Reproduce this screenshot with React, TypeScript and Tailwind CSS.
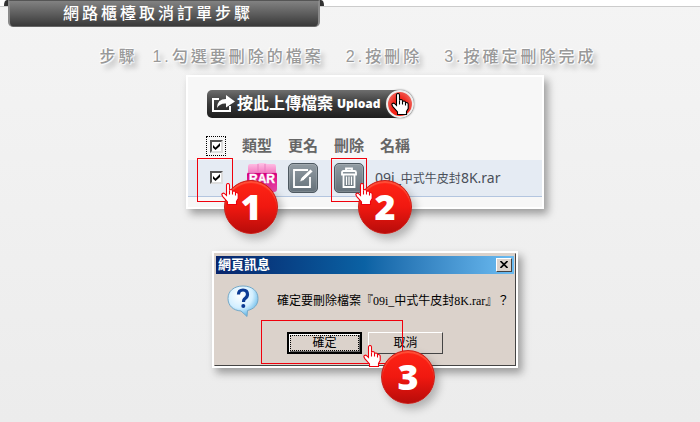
import type { ReactNode } from "react";

const sans = "font-['Liberation_Sans','Noto_Sans_CJK_TC',sans-serif]";

function Hand({ className, stroke = "#f0000c" }: { className: string; stroke?: string }) {
  return (
    <svg viewBox="0 0 18 22" className={className} fill="#fff" stroke={stroke} strokeWidth="1.1" aria-hidden="true">
      <path d="M5.5 12.5V2Q5.5.5 7 .5T8.5 2V7.5Q8.6 6.5 10 6.5T11.5 8V9Q11.6 8 13 8T14.5 9.500V10.300Q14.600 9.500 15.700 9.500T17.200 11V15.500L15.500 18.500V21.500H6.500V19L2 13.800Q0 11.200 1.500 10.400T4.500 11.500Z" />
      <path d="M8.500 7.500V11.500M11.500 9V11.500M14.500 10V12.500" />
    </svg>
  );
}

function Badge({ children, className }: { children: ReactNode; className: string }) {
  return (
    <span
      className={`absolute z-10 flex size-[54px] items-center justify-center rounded-full border border-[#c8201a] bg-linear-to-b from-[#ff2416] via-[#f01810] to-[#b80c0a] font-['Open_Sans','Noto_Sans',sans-serif] text-4xl font-extrabold text-white shadow-[4px_5px_8px_rgba(0,0,0,0.25),inset_0_2px_1px_rgba(255,110,80,0.6)] ${className}`}
    >
      {children}
    </span>
  );
}

function Tick({ label }: { label: string }) {
  return (
    <label className="grid size-[13px] place-items-center">
      <input
        type="checkbox"
        defaultChecked
        aria-label={label}
        className="peer col-start-1 row-start-1 size-[13px] appearance-none border-2 border-t-[#555] border-r-[#ddd] border-b-[#ddd] border-l-[#555] bg-white"
      />
      <svg viewBox="0 0 7 7" className="pointer-events-none invisible col-start-1 row-start-1 size-[7px] peer-checked:visible" fill="#000" aria-hidden="true">
        <path d="M0 2L2.500 4.500 7 0V3L2.500 7 0 4.700Z" />
      </svg>
    </label>
  );
}

const toolClass =
  "flex size-[30px] items-center justify-center rounded-[5px] border border-[#4e5961] bg-linear-to-b from-[#929ca3] to-[#65717a] shadow-[inset_0_0_0_1px_rgba(255,255,255,0.15)]";

function RarIcon() {
  return (
    <svg viewBox="0 0 30 30" className="block size-[30px]" role="img" aria-label="RAR">
      <defs>
        <linearGradient id="rar" x1="0" y1="0" x2="0" y2="1">
          <stop offset="0" stopColor="#ffc3e6" />
          <stop offset=".33" stopColor="#f57cc2" />
          <stop offset=".36" stopColor="#d6007f" />
          <stop offset="1" stopColor="#f04fb0" />
        </linearGradient>
      </defs>
      <path d="M3 1H10Q11 0 15 0T20 1H27Q29 1 29 4V9L30 11V26Q30 29 27 29H3Q0 29 0 26V11L1 9V4Q1 1 3 1Z" fill="url(#rar)" />
      <path d="M11 1V9M18 1V9M1 9.500H29" stroke="#e77fbd" fill="none" />
      <text x="15" y="20" textAnchor="middle" fill="#fff" stroke="#fff" strokeWidth=".4" fontFamily="Liberation Sans" fontWeight="700" fontSize="12">RAR</text>
    </svg>
  );
}

function FileTable() {
  return (
    <table className="mt-[18px] w-full table-fixed border-collapse text-left">
      <colgroup>
        <col className="w-[54px]" />
        <col className="w-[46px]" />
        <col className="w-[46px]" />
        <col className="w-[46px]" />
        <col />
      </colgroup>
      <thead className="text-[15px] leading-5 text-[#666]">
        <tr className="h-6 align-top">
          <th className="pl-[18px]">
            <span className="flex size-5 items-center justify-center border border-dotted border-black">
              <Tick label="全選" />
            </span>
          </th>
          <th className="font-bold">類型</th>
          <th className="font-bold">更名</th>
          <th className="font-bold">刪除</th>
          <th className="font-bold">名稱</th>
        </tr>
      </thead>
      <tbody>
        <tr className="h-9 border-b border-[#b3c5df] bg-[#e5ebf3]">
          <td className="relative pl-[22px]">
            <Tick label="09i_中式牛皮封8K.rar" />
            <span className="pointer-events-none absolute -top-0.5 left-[9px] h-11 w-9 border border-[#f0000c]" />
            <Badge className="top-5 left-9">1</Badge>
            <Hand className="absolute top-[23px] left-[33px] z-20 h-[22px] w-[18px]" />
          </td>
          <td className="pl-[5px]"><RarIcon /></td>
          <td>
            <button type="button" aria-label="更名" className={toolClass}>
              <svg viewBox="0 0 24 24" className="size-6" fill="none" stroke="#fff" strokeWidth="1.800">
                <path d="M17 4H3V21H19V11" />
                <path d="M8.500 16L10 12 19.500 3 22 5.500 12.500 14.500Z" fill="#fff" stroke="#6f7b84" strokeWidth=".7" />
              </svg>
            </button>
          </td>
          <td className="relative">
            <button type="button" aria-label="刪除" className={toolClass}>
              <svg viewBox="0 0 20 22" className="h-[22px] w-5" fill="none" stroke="#fff" strokeWidth="1.800">
                <path d="M3 7.500V5.500Q3 4 4.500 4H15.500Q17 4 17 5.500V7.500ZM7 4V1.500H13V4M4.500 8V20H15.500V8" />
                <path d="M7.500 9.500V18M10 9.500V18M12.500 9.500V18" strokeWidth="1.200" />
              </svg>
            </button>
            <span className="pointer-events-none absolute -top-0.5 -left-[3px] h-11 w-9 border border-[#f0000c]" />
            <Badge className="top-5 left-6">2</Badge>
            <Hand className="absolute top-[23px] left-[21px] z-20 h-[22px] w-[18px]" />
          </td>
          <td className="font-['Noto_Sans','Noto_Sans_CJK_TC',sans-serif] text-sm whitespace-nowrap text-[#4a4f59]">
            <span className="-ml-[5px]">09i_</span><span className="text-xs">中式牛皮封</span>8K.rar
          </td>
        </tr>
      </tbody>
    </table>
  );
}

function UploadCard() {
  return (
    <section className="w-[358px] border-2 border-white bg-[#f7f7f7] pt-[13px] pb-2.5 shadow-[4px_5px_8px_rgba(0,0,0,0.35)]">
      <button
        type="button"
        className="ml-[19px] flex h-7 w-[207px] items-center rounded-l-[5px] rounded-r-[14px] bg-linear-to-b from-[#6e6e6e] via-[#3a3a3a] to-[#1e1e1e] pl-1 text-base font-bold whitespace-nowrap text-white"
      >
        <svg viewBox="0 0 26 20" className="h-5 w-[26px] shrink-0" fill="none" stroke="#fff" strokeWidth="2">
          <path d="M8 5H2V17H19V12" />
          <path d="M6 14Q6 5 15 5V1L24 7.500 15 13.500V9.500Q9 9 6 14Z" fill="#fff" stroke="none" />
        </svg>
        <span>按此上傳檔案</span>
        <span className="ml-1 font-['Open_Sans',sans-serif] text-xs font-extrabold">Upload</span>
        <span className="ml-auto flex size-7 shrink-0 items-center justify-center rounded-full border-2 border-[#eee] bg-radial-[at_50%_80%] from-[#ff1508] via-[#f02a20] to-[#f09088] shadow-[0_0_2px_#555]">
          <Hand stroke="#000" className="h-[22px] w-[18px]" />
        </span>
      </button>
      <FileTable />
    </section>
  );
}

function ConfirmDialog() {
  return (
    <section
      role="dialog"
      aria-label="網頁訊息"
      className="mt-[42px] w-[306px] border-2 border-white bg-[#dbd2cb] shadow-[4px_5px_8px_rgba(0,0,0,0.35)]"
    >
      <div className="border border-t-[#dbd2cb] border-r-[#444] border-b-[#444] border-l-[#dbd2cb] px-px pt-0.5 pb-[11px]">
        <header className="flex h-[18px] items-center justify-between bg-linear-to-r from-[#08246b] via-[#0b62a4] to-[#6cbcf2] pr-0.5 pl-0.5">
          <h2 className="text-[13px] leading-4 font-bold text-white">網頁訊息</h2>
          <button
            type="button"
            aria-label="關閉"
            className="flex h-3.5 w-4 items-center justify-center border border-t-white border-r-[#444] border-b-[#444] border-l-white bg-[#dbd2cb]"
          >
            <svg viewBox="0 0 8 7" className="h-[7px] w-2" stroke="#000" strokeWidth="1.600">
              <path d="M.5 0L7.500 7M7.500 0L.5 7" />
            </svg>
          </button>
        </header>
        <div className="flex items-center gap-[18px] pt-[11px] pl-[11px]">
          <svg viewBox="0 0 32 32" className="size-8 shrink-0" aria-hidden="true">
            <defs>
              <radialGradient id="bubble" cx=".4" cy=".3" r=".7">
                <stop offset="0" stopColor="#fff" />
                <stop offset=".6" stopColor="#d3efff" />
                <stop offset="1" stopColor="#62b7e8" />
              </radialGradient>
            </defs>
            <path d="M16 1C25 1 31 6 31 13.500 31 20 27 24 20.500 25.500L20 31.500 14 26C6 25.500 1 20.500 1 13.500 1 6 7 1 16 1Z" fill="url(#bubble)" stroke="#75a9c8" />
            <path d="M11.500 9.500Q11.500 5 16 5T20.500 9.500Q20.500 12 17.500 14 16.500 15 16.500 17" fill="none" stroke="#0b3a94" strokeWidth="3.200" />
            <circle cx="16.300" cy="21" r="2" fill="#0b3a94" />
          </svg>
          <p className="font-['Liberation_Serif','Noto_Sans_CJK_TC',serif] text-xs whitespace-nowrap text-black">
            確定要刪除檔案『09i_中式牛皮封8K.rar』？
          </p>
        </div>
        <div className="relative mt-[15px] flex gap-1.5 pl-[71px] text-xs text-black">
          <button
            type="button"
            className="h-[22px] w-[75px] border-2 border-black bg-[#dbd2cb] p-px shadow-[inset_1px_1px_0_#fff,inset_-1px_-1px_0_#666]"
          >
            <span className="flex h-full items-center justify-center border border-dotted border-black">確定</span>
          </button>
          <button
            type="button"
            className="h-[22px] w-[75px] border border-t-white border-r-[#444] border-b-[#444] border-l-white bg-[#dbd2cb]"
          >
            取消
          </button>
          <span className="pointer-events-none absolute -top-3 left-[45px] h-11 w-[142px] border border-[#f0000c]" />
          <Badge className="top-[18px] left-[165px]">3</Badge>
          <Hand className="absolute top-[13px] left-[147px] z-20 h-[22px] w-[18px]" />
        </div>
      </div>
    </section>
  );
}

export default function App() {
  return (
    <div className={`min-h-screen bg-linear-to-b from-[#f4f4f4] to-[#ececec] ${sans}`}>
      <header className="flex h-[7px] items-start border-b border-[#ccc] bg-white pl-1">
        <svg viewBox="0 0 4 6" className="h-1.5 w-1" fill="#333" aria-hidden="true">
          <path d="M0 6Q0 0 3 0H4V6Z" />
        </svg>
        <h1 className="h-[27px] w-[312px] shrink-0 rounded-b-[5px] border-x-2 border-t border-b border-x-[#8a8a8a] border-t-[#555] border-b-[#666] bg-linear-to-b from-[#828282] via-[#5e5e5e] to-[#393939] pl-[53px] text-base leading-[25px] font-medium tracking-[3px] whitespace-nowrap text-white">
          網路櫃檯取消訂單步驟
        </h1>
        <svg viewBox="0 0 4 6" className="h-1.5 w-1" fill="#333" aria-hidden="true">
          <path d="M4 6Q4 0 1 0H0V6Z" />
        </svg>
      </header>
      <main className="pb-10">
        <div className="mt-[38px] flex justify-center gap-[22px] pr-1 text-base leading-6 font-medium tracking-[3px] whitespace-nowrap text-[#999] [text-shadow:0_0_2px_#fff,0_0_2px_#fff,1px_1px_1px_#fff,-1px_-1px_1px_#fff,4px_5px_5px_rgba(0,0,0,0.25)]">
          <p className="flex gap-[15px]"><span>步驟</span><span>1.勾選要刪除的檔案</span></p>
          <p>2.按刪除</p>
          <p>3.按確定刪除完成</p>
        </div>
        <div className="mt-1.5 flex flex-col items-center pl-[30px]">
          <UploadCard />
          <ConfirmDialog />
        </div>
      </main>
    </div>
  );
}
